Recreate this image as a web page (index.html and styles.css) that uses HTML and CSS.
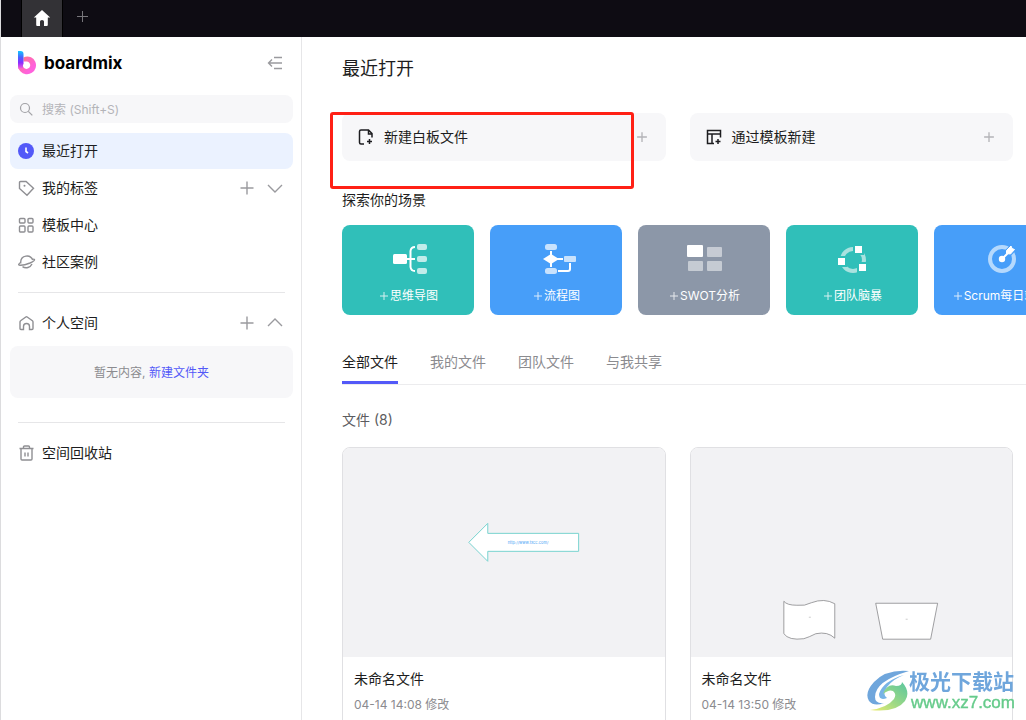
FILE: index.html
```html
<!DOCTYPE html>
<html lang="zh-CN">
<head>
<meta charset="utf-8">
<meta name="viewport" content="width=device-width, initial-scale=1">
<title>boardmix</title>
<link rel="stylesheet" href="styles.css">
</head>
<body>
<svg class="defs" width="0" height="0" aria-hidden="true">
  <symbol id="plus" viewBox="0 0 16 16"><path d="M8 1.500v13M1.500 8h13"/></symbol>
  <symbol id="plus-s" viewBox="0 0 8 8"><path d="M4 0v8M0 4h8"/></symbol>
</svg>
<header class="topbar">
  <button class="home-tab" aria-label="主页">
    <svg width="18" height="18" viewBox="0 0 18 18"><path d="M9 0L.8 7.600h2.400V15q0 1 1 1H7v-4.500q0-1.500 2-1.500t2 1.500V16h2.800q1 0 1-1V7.600h2.400z" fill="#fff"/></svg>
  </button>
  <button class="new-tab" aria-label="新标签页"><svg width="12" height="12" viewBox="0 0 12 12"><path d="M5.500 0v11M0 5.500h11" stroke="#77767b"/></svg></button>
</header>
<div class="shell">
  <aside class="sidebar">
    <div class="brand">
      <svg width="18" height="24" viewBox="0 0 18 24">
        <defs>
          <linearGradient id="stem" x1="0" y1="0" x2="0" y2="1"><stop offset="0" stop-color="#12c8ff"/><stop offset=".35" stop-color="#4a62ff"/><stop offset=".65" stop-color="#8b2cff"/><stop offset="1" stop-color="#ff5fd8"/></linearGradient>
          <linearGradient id="bowl" x1="0" y1="0" x2=".7" y2=".7"><stop offset="0" stop-color="#ff8c50"/><stop offset=".5" stop-color="#ff6bb0"/><stop offset="1" stop-color="#ff62dc"/></linearGradient>
        </defs>
        <path d="M5.500 6.400Q9 4.500 13 6.200A9 9 0 1 1 0 14.500L5.500 12A3.700 3.700 0 1 0 9 10.500H5.500z" fill="url(#bowl)"/>
        <path d="M0 0h2.500Q5.500 0 5.500 3v9.500Q4.500 15 5 17L.5 18Q0 16 0 14z" fill="url(#stem)"/>
      </svg>
      <span class="brand-name">boardmix</span>
      <button class="icon-btn" aria-label="收起侧栏"><svg class="line" width="16" height="16" viewBox="0 0 16 16"><path d="M7 2.500h8M1.500 8H15M7 13.500h8M5 4.500L1.500 8 5 11.500"/></svg></button>
    </div>
    <label class="search">
      <svg width="16" height="16" viewBox="0 0 16 16"><circle cx="7" cy="7" r="4.500"/><path d="M10.300 10.300l4 4"/></svg>
      <input type="text" placeholder="搜索 (Shift+S)" aria-label="搜索">
    </label>
    <nav class="menu">
      <a class="item active" href="#">
        <svg width="16" height="16" viewBox="0 0 16 16"><circle cx="8" cy="8" r="8" fill="#5359f8"/><path d="M8 4.500V8.500l2 1.500" fill="none" stroke="#fff" stroke-width="1.600"/></svg>
        <span class="label">最近打开</span>
      </a>
      <div class="item">
        <svg class="line" width="16" height="16" viewBox="0 0 16 16"><path d="M2.500 1.500h5.600L15.500 8.300 9 15.200 1.500 8.500V2.500q0-1 1-1z"/><circle cx="6.500" cy="5.800" r="1" fill="#8f8f93" stroke="none"/></svg>
        <a class="label" href="#">我的标签</a>
        <button class="icon-btn" aria-label="新建标签"><svg class="line" width="16" height="16"><use href="#plus"/></svg></button>
        <button class="icon-btn" aria-label="展开"><svg class="line" width="16" height="16" viewBox="0 0 16 16"><path d="M1 5l7 7 7-7"/></svg></button>
      </div>
      <a class="item" href="#">
        <svg class="line" width="16" height="16" viewBox="0 0 16 16"><rect x="1.500" y="1.500" width="5.500" height="4.500" rx="1"/><rect x="10" y="1.500" width="5" height="4.500" rx="1"/><rect x="1.500" y="9" width="5.500" height="6" rx="1"/><rect x="10" y="9" width="5" height="6" rx="1"/></svg>
        <span class="label">模板中心</span>
      </a>
      <a class="item" href="#">
        <svg class="line" width="16" height="16" viewBox="0 0 16 16"><path d="M2.700 9.500V8a6.200 6.200 0 0 1 12-2M4.500 12.700a6.500 6.500 0 0 0 9.500-2.700M2.800 8.200Q-1 11 2 11.300 6 11.500 12 9q5-2.300 4.500-3.500-.5-.8-2 0"/></svg>
        <span class="label">社区案例</span>
      </a>
    </nav>
    <hr class="rule">
    <div class="item">
      <svg class="line" width="16" height="16" viewBox="0 0 16 16"><path d="M5.500 14.500H3q-1 0-1-1V7q0-.8.600-1.200L7.800 2q.7-.5 1.400 0l5.200 3.800q.6.500.6 1.200v6.500q0 1-1 1h-2.500v-3a3 3 0 0 0-6 0z"/></svg>
      <a class="label" href="#">个人空间</a>
      <button class="icon-btn" aria-label="新建"><svg class="line" width="16" height="16"><use href="#plus"/></svg></button>
      <button class="icon-btn" aria-label="收起"><svg class="line" width="16" height="16" viewBox="0 0 16 16"><path d="M1 11l7-7 7 7"/></svg></button>
    </div>
    <p class="empty">暂无内容, <a href="#">新建文件夹</a></p>
    <hr class="rule rule-late">
    <a class="item" href="#">
      <svg class="line" width="16" height="16" viewBox="0 0 16 16"><path d="M1.500 3.500h14M5.500 3.500V2q0-1 1-1h4q1 0 1 1v1.500M3 3.500V14q0 1 1 1h9q1 0 1-1V3.500M7 7.500v4M10 7.500v4"/></svg>
      <span class="label">空间回收站</span>
    </a>
  </aside>
  <main class="main">
    <h1 class="title">最近打开</h1>
    <div class="create">
      <div class="create-slot">
        <button class="create-btn">
          <svg width="16" height="16" viewBox="0 0 16 16" class="dark"><path d="M6 15H3q-1.500 0-1.500-1.500V2.500q0-1.500 1.500-1.500h7.500L14 4.500v4M10.500 1v4H14M11.500 10v5M9 12.500h5"/></svg>
          <span class="label">新建白板文件</span>
          <svg class="faint" width="12" height="12"><use href="#plus"/></svg>
        </button>
        <span class="highlight"></span>
      </div>
      <div class="create-slot">
        <button class="create-btn">
          <svg width="16" height="16" viewBox="0 0 16 16" class="dark"><path d="M8 14.500H1.500V1.500h13v7M1.500 5h13M6 5v9.500M12 10v5M9.500 12.500h5"/></svg>
          <span class="label">通过模板新建</span>
          <svg class="faint" width="12" height="12"><use href="#plus"/></svg>
        </button>
      </div>
    </div>
    <h2 class="subtitle">探索你的场景</h2>
    <div class="scenes">
      <button class="scene teal">
        <svg width="48" height="36" viewBox="0 0 48 36"><rect x="9" y="13" width="14" height="10" rx="1.500" fill="#fff"/><g fill="#fff" opacity=".7"><rect x="33" y="3" width="10" height="6" rx="2"/><rect x="33" y="15" width="10" height="6" rx="2"/><rect x="33" y="27" width="10" height="6" rx="2"/></g><path d="M23 18h8M31 6q-4 0-4.500 4v16q.5 4 4.500 4" fill="none" stroke="#fff" stroke-width="2"/></svg>
        <span class="scene-label"><svg width="8" height="8"><use href="#plus-s"/></svg>思维导图</span>
      </button>
      <button class="scene blue">
        <svg width="48" height="36" viewBox="0 0 48 36"><g fill="#fff" opacity=".7"><rect x="13" y="3" width="12" height="6" rx="2.500"/><rect x="32" y="15" width="12" height="6" rx="1"/><rect x="13" y="27" width="12" height="6" rx="2.500"/></g><path d="M19 10v16M25 18h6M26 30h10q2 0 2-2v-6" fill="none" stroke="#fff" stroke-width="2"/><path d="M11 18l8-5 8 5-8 5z" fill="#fff"/></svg>
        <span class="scene-label"><svg width="8" height="8"><use href="#plus-s"/></svg>流程图</span>
      </button>
      <button class="scene gray">
        <svg width="48" height="36" viewBox="0 0 48 36"><rect x="7" y="4" width="16" height="12" rx="1" fill="#fff"/><g fill="#fff" opacity=".5"><rect x="27" y="6" width="15" height="10" rx="1"/><rect x="8" y="20" width="15" height="10" rx="1"/><rect x="27" y="20" width="15" height="10" rx="1"/></g></svg>
        <span class="scene-label"><svg width="8" height="8"><use href="#plus-s"/></svg>SWOT分析</span>
      </button>
      <button class="scene teal">
        <svg width="48" height="36" viewBox="0 0 48 36"><circle cx="25" cy="19" r="11" fill="none" stroke="#a9e2df" stroke-width="4"/><g fill="#fff" stroke="#30bfb9" stroke-width="2"><rect x="26" y="4" width="9" height="9"/><rect x="9" y="16" width="9" height="9"/><rect x="30" y="22" width="9" height="9"/></g></svg>
        <span class="scene-label"><svg width="8" height="8"><use href="#plus-s"/></svg>团队脑暴</span>
      </button>
      <button class="scene blue">
        <svg width="48" height="36" viewBox="0 0 48 36"><circle cx="26" cy="18" r="12" fill="none" stroke="#b5d9fd" stroke-width="4"/><path d="M26 18L38 6" stroke="#479ef9" stroke-width="8"/><circle cx="26" cy="18" r="3.200" fill="#fff"/><path d="M26 18l7-7" stroke="#fff" stroke-width="2"/><path d="M30.500 12.500V9.500L35 5l1 2.500 2.500 1L34.500 13z" fill="#fff" stroke="#fff"/></svg>
        <span class="scene-label"><svg width="8" height="8"><use href="#plus-s"/></svg>Scrum每日站会</span>
      </button>
    </div>
    <nav class="tabs">
      <a class="tab current" href="#">全部文件</a>
      <a class="tab" href="#">我的文件</a>
      <a class="tab" href="#">团队文件</a>
      <a class="tab" href="#">与我共享</a>
    </nav>
    <p class="count">文件 (8)</p>
    <div class="files">
      <article class="file">
        <svg class="preview" viewBox="1 1 322 209"><path d="M127 95.500l19-19v10h91v18h-91v10z" fill="#fff" stroke="#78d3cf"/><text x="166" y="97" class="tiny">http://www.txcc.com/</text></svg>
        <div class="file-info"><h3 class="file-name">未命名文件</h3><p class="file-meta">04-14 14:08 修改</p></div>
      </article>
      <article class="file">
        <svg class="preview" viewBox="1 1 322 209"><g fill="#fff" stroke="#77777a" stroke-width=".7"><path d="M94 154.500q3 4 13 4 8 1 14.500-2.500 13-5 23.500 1v34.500q-7-7-19-4.500-7 3.500-12 5-15 2-20-5z"/><path d="M186 156.500h62l-7 36h-48z"/></g><path d="M119 170.500h2M216 172.500h2" stroke="#ccc"/></svg>
        <div class="file-info"><h3 class="file-name">未命名文件</h3><p class="file-meta">04-14 13:50 修改</p></div>
      </article>
    </div>
  </main>
</div>
<div class="watermark">
  <svg width="42" height="42" viewBox="0 0 42 42">
    <defs><linearGradient id="swirl" x1="0" y1="1" x2="1" y2="0"><stop offset="0" stop-color="#f0ee70"/><stop offset=".45" stop-color="#9ed985"/><stop offset="1" stop-color="#58c6a0"/></linearGradient></defs>
    <path d="M42 1Q19-1 7 12-3 23 2 31q5 6 15 2-9 1-9-6Q8 11 42 1z" fill="#6fa6dc"/>
    <path d="M37 5Q16 11 12 24q0 7 8 4Q15 25 20 17 26 9 37 5z" fill="#78b4e6"/>
    <path d="M35 12q9 10 3 19Q29 43 3 40q17-2 24-11 3-5-1-8-4-2-10 3 4-11 13-8 6 0 6-4z" fill="url(#swirl)"/>
  </svg>
  <div class="wm-text"><span class="wm-name">极光下载站</span><span class="wm-url">www.xz7.com</span></div>
</div>
</body>
</html>
```
FILE: styles.css
```css
* { box-sizing: border-box; }
body {
  margin: 0;
  height: 100vh;
  display: flex;
  flex-direction: column;
  overflow: hidden;
  border-left: 1px solid #dcdcde;
  background: #fff;
  color: #1d1d20;
  font: 14px/20px Inter, "Noto Sans CJK SC", sans-serif;
}
h1, h2, h3, p { margin: 0; font-weight: 400; }
a { color: inherit; text-decoration: none; }
button { margin: 0; padding: 0; border: 0; background: none; color: inherit; font: inherit; cursor: pointer; }
svg { display: block; flex: none; }
.defs { position: absolute; }

.topbar { flex: none; display: flex; height: 37px; padding-left: 20px; background: #0e0c13; }
.home-tab { display: grid; place-items: center; width: 42px; background: #333236; border: solid #000; border-width: 0 1px; }
.new-tab { display: grid; place-items: center; width: 40px; padding-bottom: 4px; }

.shell { flex: 1; min-height: 0; display: flex; }
.sidebar { flex: none; width: 301px; padding: 0 8px 0 9px; border-right: 1px solid #e6e6e8; }
.brand { display: flex; align-items: center; gap: 8px; height: 52px; padding: 0 10px 0 8px; }
.brand-name { flex: 1; color: #000; font: 700 17px/24px Inter, sans-serif; }
.line, .search svg { fill: none; stroke: #8f8f93; stroke-width: 1.4; }
.icon-btn .line { stroke: #9a9a9e; }
.search { display: flex; align-items: center; gap: 8px; height: 28px; margin: 6px 0 10px; padding: 0 8px; border-radius: 8px; background: #f7f7f9; }
.search svg { stroke: #a2a2a6; stroke-width: 1.2; }
.search input { flex: 1; min-width: 0; padding: 2px 0 0; border: 0; outline: 0; background: none; font: inherit; font-size: 12px; }
.search input::placeholder { color: #b4b4b8; opacity: 1; }
.menu { display: grid; gap: 1px; }
.item { display: flex; align-items: center; gap: 8px; height: 36px; padding: 0 10px 0 8px; border-radius: 8px; }
.item .icon-btn + .icon-btn { margin-left: 4px; }
.item > svg { overflow: visible; }
.active { background: #ebf2ff; }
.label { flex: 1; text-align: left; }
.rule { height: 1px; margin: 12px 8px; border: 0; background: #e6e6e8; }
.rule-late { margin-top: 24px; }
.empty { margin-top: 5px; padding: 17px 16px 15px; border-radius: 8px; background: #f7f7f9; color: #8b8b8f; font-size: 12px; text-align: center; }
.empty a { color: #5359f8; }

.main { flex: 1; min-width: 0; padding: 18px 13px 0 40px; overflow: hidden; }
.title { font-size: 18px; line-height: 28px; }
.create { display: grid; grid-template-columns: 1fr 1fr; gap: 24px; margin-top: 30px; }
.create-slot { position: relative; }
.create-btn { display: flex; align-items: center; gap: 10px; width: 100%; height: 48px; padding: 0 18px 0 16px; border-radius: 8px; background: #f7f7f9; }
.dark { fill: none; stroke: #1d1d20; stroke-width: 1.5; }
.faint { stroke: #b4b4b8; stroke-width: 1.8; }
.highlight { position: absolute; top: -1px; left: -12px; right: 32px; height: 77px; border: 3px solid #ff2015; border-radius: 3px; pointer-events: none; }
.subtitle { margin-top: 29px; font-size: 14px; }
.scenes { display: flex; gap: 16px; margin: 15px -13px 0 0; overflow: hidden; }
.scene { flex: none; display: flex; flex-direction: column; align-items: center; gap: 10px; width: 132px; height: 90px; padding-top: 16px; border-radius: 8px; color: #fff; font-size: 12px; line-height: 18px; }
.scene-label { display: flex; align-items: center; gap: 2px; padding-left: 2px; white-space: nowrap; }
.scene-label svg { stroke: #fff; opacity: 0.8; }
.teal { background: #30bfb9; }
.blue { background: #479ef9; }
.gray { background: #8c97a8; }
.tabs { display: flex; gap: 32px; margin: 37px -13px 0 0; border-bottom: 1px solid #ececee; }
.tab { padding-bottom: 9px; border-bottom: 3px solid transparent; color: #8b8b8f; }
.current { border-color: #5359f8; color: #1d1d20; }
.count { margin-top: 25px; color: #5c5c60; }
.files { display: grid; grid-template-columns: 1fr 1fr; gap: 24px; margin-top: 17px; }
.file { border: 1px solid #e0e0e3; border-radius: 8px; overflow: hidden; }
.preview { width: 100%; height: auto; background: #f2f2f4; }
.tiny { fill: #4aa3f5; font-size: 4px; }
.file-info { padding: 12px 11px 20px; }
.file-name { font-size: 14px; }
.file-meta { margin-top: 8px; color: #8b8b8f; font-size: 12px; line-height: 16px; }

.watermark { position: fixed; right: 11px; bottom: 8px; display: flex; align-items: center; }
.wm-text { display: flex; flex-direction: column; }
.wm-name { color: #6fa6dc; font-size: 21px; font-weight: 700; line-height: 24px; }
.wm-url { padding-left: 2px; color: #66cb8b; font: 17px/18px "Liberation Sans", sans-serif; -webkit-text-stroke: 0.4px #66cb8b; }
```
